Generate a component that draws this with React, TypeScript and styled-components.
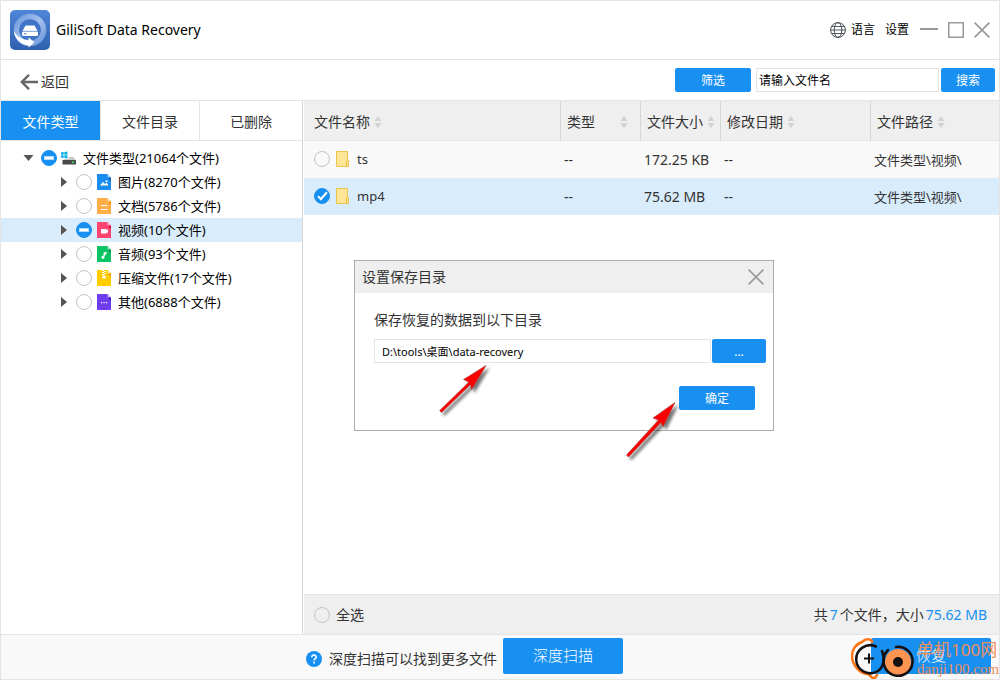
import React from 'react';
import styled, { createGlobalStyle, css } from 'styled-components';

const BLUE = '#1790f2';
const LINE = '#e4e4e4';
const SANS = '"Noto Sans", "Noto Sans CJK SC", sans-serif';

const GlobalStyle = createGlobalStyle`
  *, *::before, *::after { box-sizing: border-box; }
  body { margin: 0; background: #fff; color: #333; font: 14px/20px ${SANS}; }
  button, input { font: inherit; color: inherit; margin: 0; }
  svg { display: block; flex: none; }
`;

const Window = styled.div`
  position: relative;
  display: flex;
  flex-direction: column;
  min-height: 100vh;
  border: 1px solid ${LINE};
  overflow: hidden;
`;

const TitleBar = styled.header`
  display: flex;
  align-items: center;
  height: 59px;
  padding: 0 9px;
  border-bottom: 1px solid ${LINE};
  color: #000;
`;

const AppTitle = styled.h1`
  margin: 0 auto 0 6px;
  font-size: 14px;
  font-weight: 400;
`;

const MenuLinks = styled.nav`
  display: flex;
  align-items: center;
  gap: 10px;
  font-size: 12px;
`;

const WindowControls = styled.div`
  display: flex;
  align-items: center;
  gap: 10px;
  margin-left: 11px;
`;

const BareButton = styled.button`
  display: flex;
  align-items: center;
  gap: 5px;
  padding: 0;
  border: 0;
  background: none;
  cursor: pointer;
`;

const Toolbar = styled.div`
  display: flex;
  align-items: center;
  height: 41px;
  padding: 0 4px 0 19px;
  border-bottom: 1px solid ${LINE};
`;

const BackButton = styled(BareButton)`
  gap: 3px;
  margin-right: auto;
  padding-top: 4px;
`;

const FillButton = styled.button<{ $width: number; $large?: boolean }>`
  flex: none;
  width: ${(p) => p.$width}px;
  height: ${(p) => (p.$large ? 36 : 24)}px;
  padding: ${(p) => (p.$large ? '0 0 2px' : '2px 0 0')};
  border: 0;
  border-radius: 2px;
  background: ${BLUE};
  color: #fff;
  font-size: ${(p) => (p.$large ? 15 : 12)}px;
  font-weight: ${(p) => (p.$large ? 300 : 400)};
  cursor: pointer;
`;

const TextBox = styled.input`
  height: 24px;
  border: 1px solid ${LINE};
  background: #fff;
  color: #000;
  font-size: 11px;
  line-height: 20px;
  outline: none;
  &::placeholder { color: #000; opacity: 1; }
`;

const SearchBox = styled(TextBox)`
  width: 183px;
  margin: 0 2px 0 5px;
  padding: 1px 2px 0;
  font-size: 12px;
`;

const Main = styled.main`
  display: flex;
  flex: 1;
`;

const Sidebar = styled.aside`
  flex: none;
  width: 302px;
  border-right: 1px solid #d6d6d6;
`;

const Tabs = styled.div`
  display: grid;
  grid-template-columns: 100px 99px 1fr;
  height: 40px;
  border-bottom: 1px solid ${LINE};
`;

const Tab = styled.button<{ $active?: boolean }>`
  padding: 2px 0 0;
  border: 0;
  border-right: 1px solid ${LINE};
  background: ${(p) => (p.$active ? BLUE : '#fff')};
  color: ${(p) => (p.$active ? '#fff' : '#333')};
  cursor: pointer;
  &:last-child { border-right: 0; }
`;

const Tree = styled.ul`
  margin: 0;
  padding: 5px 0 0;
  list-style: none;
`;

const TreeRow = styled.li<{ $child?: boolean; $selected?: boolean }>`
  display: flex;
  align-items: center;
  height: 24px;
  padding-left: ${(p) => (p.$child ? 57 : 22)}px;
  background: ${(p) => (p.$selected ? '#d9ecfc' : 'transparent')};
`;

const TreeLabel = styled.label`
  display: flex;
  align-items: center;
  margin-left: 7px;
  color: #000;
  font-size: 13px;
  white-space: nowrap;
`;

const TreeIcon = styled.span`
  width: 16px;
  margin: 0 6px 0 4px;
`;

const RoundCheck = styled.input.attrs({ type: 'checkbox' })<{ $mixed?: boolean }>`
  position: relative;
  flex: none;
  width: 16px;
  height: 16px;
  appearance: none;
  border: 1px solid #c4c4c4;
  border-radius: 50%;
  background: transparent;
  &:checked { border-color: ${BLUE}; background: ${BLUE}; }
  &:checked::after {
    content: '';
    position: absolute;
    ${(p) =>
      p.$mixed
        ? css`left: 2px; top: 5px; width: 10px; height: 4px; background: #fff; border: 1px solid #b5dbfb;`
        : css`left: 5px; top: 1px; width: 5px; height: 10px; border: solid #fff; border-width: 0 2px 2px 0; transform: rotate(42deg);`}
  }
`;

const Content = styled.section`
  display: flex;
  flex: 1;
  flex-direction: column;
  padding-left: 1px;
`;

const FileTable = styled.table`
  width: 100%;
  table-layout: fixed;
  border-collapse: separate;
  border-spacing: 0;
`;

const HeadCell = styled.th<{ $width?: number }>`
  width: ${(p) => (p.$width ? p.$width + 'px' : 'auto')};
  height: 40px;
  padding: 2px 0 0 6px;
  border-bottom: 1px solid ${LINE};
  border-left: 1px solid #d6d6d6;
  background: #efefef;
  font-weight: 400;
  text-align: left;
  &:first-child { padding-left: 10px; border-left: 0; }
`;

const HeadLabel = styled.span<{ $spread?: boolean }>`
  display: flex;
  align-items: center;
  justify-content: ${(p) => (p.$spread ? 'space-between' : 'flex-start')};
  gap: 4px;
  padding-right: ${(p) => (p.$spread ? 12 : 0)}px;
`;

const FileRow = styled.tr<{ $selected?: boolean }>`
  background: ${(p) => (p.$selected ? '#d9ecfc' : '#f9f9f9')};
`;

const Cell = styled.td<{ $numeric?: boolean }>`
  height: 37px;
  padding: 0 0 0 4px;
  font-size: ${(p) => (p.$numeric ? 14 : 13)}px;
  white-space: nowrap;
  &:first-child { padding: 0 0 2px 10px; }
`;

const FileName = styled.label`
  display: flex;
  align-items: center;
`;

const FolderSlot = styled.span`
  margin: 0 8px 0 6px;
`;

const SummaryBar = styled.div`
  display: flex;
  align-items: center;
  justify-content: space-between;
  height: 40px;
  margin-top: auto;
  padding: 0 12px 0 10px;
  border-top: 1px solid ${LINE};
  background: #efefef;
`;

const SelectAll = styled.label`
  display: flex;
  align-items: center;
  gap: 6px;
`;

const Count = styled.span`
  margin: 0 2px;
  color: ${BLUE};
  &:last-child { margin-right: 0; }
`;

const Footer = styled.footer`
  display: flex;
  align-items: flex-start;
  height: 45px;
  padding: 3px 8px 0 305px;
  border-top: 1px solid ${LINE};
  background: #f9f9f9;
`;

const Hint = styled.div`
  display: flex;
  align-items: center;
  gap: 7px;
  height: 42px;
  margin-right: 6px;
`;

const RecoverSlot = styled.div`
  position: relative;
  margin-left: auto;
`;

const Watermark = styled.div`
  position: absolute;
  top: 0;
  right: -8px;
  display: flex;
  align-items: flex-start;
  gap: 3px;
  color: #ee8f5c;
  pointer-events: none;
`;

const WatermarkText = styled.div`
  width: 82px;
  padding-top: 2px;
  font-size: 17px;
  line-height: 20px;
  white-space: nowrap;
`;

const WatermarkSite = styled.div`
  font: 15px/18px "Liberation Serif", serif;
`;

const Dialog = styled.section`
  position: absolute;
  top: 259px;
  left: 353px;
  width: 420px;
  height: 171px;
  border: 1px solid #acacac;
  background: #fff;
`;

const DialogHeader = styled.div`
  display: flex;
  align-items: center;
  justify-content: space-between;
  height: 32px;
  padding: 0 9px 0 7px;
  background: #efefef;
`;

const DialogTitle = styled.h2`
  margin: 0;
  font-size: 14px;
  font-weight: 400;
`;

const DialogBody = styled.div`
  display: flex;
  flex-direction: column;
  gap: 9px;
  padding: 17px 7px 0 19px;
`;

const PathRow = styled.div`
  display: flex;
  gap: 1px;
`;

const PathBox = styled(TextBox)`
  flex: 1;
  min-width: 0;
  padding: 0 7px;
`;

const DialogActions = styled.div`
  display: flex;
  justify-content: flex-end;
  padding: 14px 11px 0 0;
`;

const Arrows = styled.svg`
  position: absolute;
  top: 99px;
  left: 80px;
  pointer-events: none;
`;

const AppLogo = () => (
  <svg width="40" height="40" viewBox="0 0 40 40" aria-hidden="true">
    <defs>
      <linearGradient id="tile" x1="0" y1="0" x2="0" y2="1">
        <stop offset="0" stopColor="#4f86d8" />
        <stop offset="1" stopColor="#2f60b0" />
      </linearGradient>
      <linearGradient id="ring" x1="0" y1="0" x2="1" y2="1">
        <stop offset="0" stopColor="#6f9ade" />
        <stop offset="0.5" stopColor="#a3c0ee" />
        <stop offset="1" stopColor="#6d97da" />
      </linearGradient>
    </defs>
    <rect width="40" height="40" rx="5" fill="url(#tile)" />
    <circle cx="20" cy="20" r="13.5" fill="none" stroke="url(#ring)" strokeWidth="5.500" />
    <circle cx="20" cy="20" r="10.6" fill="#3f74c6" />
    <path d="M3.800 21C5 29 10.500 34.500 18.500 35.500V37.500L24.500 32.300L18.500 27.500V30C12.500 30 7 27 3.800 21Z" fill="#fff" />
    <path d="M15.500 15.500H24.500L27.500 21H12.500Z" fill="#fff" />
    <rect x="12" y="21.300" width="16" height="4.700" rx="1.500" fill="#fff" />
    <path d="M13 21.300H27" stroke="#5a88d0" strokeWidth="0.700" />
    <path d="M14 23.800H16.500" stroke="#3c6fc0" strokeWidth="0.900" />
  </svg>
);

const Globe = () => (
  <svg width="16" height="16" viewBox="0 0 16 16" fill="none" stroke="#444c55" aria-hidden="true">
    <circle cx="8" cy="8" r="7.400" />
    <ellipse cx="8" cy="8" rx="3.800" ry="7.400" />
    <path d="M1.500 4.500H14.500M1.500 11.500H14.500M.6 8H15.400" strokeWidth="0.900" />
  </svg>
);

const Cross = () => (
  <svg width="16" height="16" viewBox="0 0 16 16" stroke="#999" strokeWidth="1.600" aria-hidden="true">
    <path d="M.6 .6L15.400 15.400M15.400 .6L.6 15.400" />
  </svg>
);

const SortMark = () => (
  <svg width="8" height="12" viewBox="0 0 8 12" fill="#d2d2d2" aria-hidden="true">
    <path d="M4 0L7.500 5H.5ZM4 12L.5 7H7.500Z" />
  </svg>
);

const Caret = ({ open }: { open?: boolean }) => (
  <svg width="11" height="10" viewBox="0 0 11 10" fill="#555" aria-hidden="true">
    <path d={open ? 'M.5 2H10.500L5.500 8Z' : 'M3 0V10L9 5Z'} />
  </svg>
);

const Folder = () => (
  <svg width="13" height="16" viewBox="0 0 13 16" aria-hidden="true">
    <path d="M.5 .5H11.500V9.500H12.500V15.500H.5Z" fill="#ffe596" stroke="#ecc54c" />
    <path d="M10.500 15V10.500L11.500 9.500" fill="none" stroke="#e5b934" />
  </svg>
);

const Drive = () => (
  <svg width="16" height="16" viewBox="0 0 16 16" aria-hidden="true">
    <path d="M0 2.300L2.700 2V4.700H0ZM3.300 1.900L6.500 1.500V4.700H3.300ZM0 5.300H2.700V8L0 7.700ZM3.300 5.300H6.500V8.500L3.300 8.100Z" fill="#12b4ea" />
    <path d="M7.500 7H12.500L15 10.500H1.500L3 9H7.500Z" fill="#c9c9c9" />
    <rect x="1.500" y="10" width="13.500" height="4.500" rx="0.500" fill="#484848" />
    <rect x="11" y="11.500" width="2" height="1.500" fill="#3ee85a" />
  </svg>
);

type Kind = 'image' | 'doc' | 'video' | 'audio' | 'zip' | 'other';

const PAGE: Record<Kind, [string, string]> = {
  image: ['#1a8cf0', '#0c62b8'],
  doc: ['#ffae48', '#ff8c00'],
  video: ['#ff4470', '#d8003c'],
  audio: ['#0dc464', '#088c46'],
  zip: ['#ffcc00', '#e89c00'],
  other: ['#6f3df0', '#4310c0'],
};

const GLYPH: Record<Kind, React.ReactNode> = {
  image: <path d="M3 11.500L6 8L8 10L9.500 8.500L11.500 11.500ZM8.500 6.500H10.500V8H8.500Z" fill="#fff" />,
  doc: <path d="M4 7.500H10.500M4 11.500H10.500" stroke="#fff" />,
  video: <path d="M4 7H9.500V8.300L11 7.500V11L9.500 10.200V11.500H4Z" fill="#fff" />,
  audio: <path d="M7 10.500V6.500L10 7M6.900 10.500A1.200 1.200 0 1 1 5 10.500A1.200 1.200 0 0 1 6.900 10.500" stroke="#fff" fill="#fff" strokeWidth="0.900" />,
  zip: <path d="M5 0H7V1H5ZM7 1H9V2H7ZM5 2H7V3H5ZM7 3H9V4H7ZM5 4H7V5H5ZM5.500 5.500H8.500V8.500H5.500Z" fill="#fff" />,
  other: <path d="M4 8H5.200V9.200H4ZM6.500 8H7.700V9.200H6.500ZM9 8H10.200V9.200H9Z" fill="#fff" />,
};

const PageIcon = ({ kind }: { kind: Kind }) => (
  <svg width="16" height="16" viewBox="-1 0 16 16" aria-hidden="true">
    <path d="M0 0H10.500L14 3.500V16H0Z" fill={PAGE[kind][0]} />
    <path d="M10.500 3.500H14V7Z" fill={PAGE[kind][1]} />
    <path d="M10.500 0L14 3.500H10.500Z" fill="#fff" opacity="0.550" />
    {GLYPH[kind]}
  </svg>
);

const WatermarkLogo = () => (
  <svg width="63" height="42" viewBox="0 0 63 42" fill="none" aria-hidden="true">
    <path d="M21 4C21 1 15 0 11 4C3 7 0 14 1.500 22C4 31 11 36 17 36C20 37 19 40 23 40C25 40 25 38 26 37" stroke="#ff7410" strokeWidth="2.500" strokeLinecap="round" />
    <path d="M25 8.500A14 14 0 1 0 26 33.500C33 30 34 20 31 13" stroke="#151010" strokeWidth="2.500" strokeLinecap="round" />
    <path d="M13 20.500H23M18 15.500V25.500" stroke="#151010" strokeWidth="2" />
    <circle cx="47" cy="24" r="13" fill="#ff9350" />
    <path d="M45 9A14.500 14.500 0 1 1 33 20C33 17 35 14 37 12" stroke="#151010" strokeWidth="2.500" strokeLinecap="round" />
    <circle cx="47" cy="24" r="5" fill="#151010" />
  </svg>
);

const TREE: { kind: Kind; label: string; mixed?: boolean }[] = [
  { kind: 'image', label: '图片(8270个文件)' },
  { kind: 'doc', label: '文档(5786个文件)' },
  { kind: 'video', label: '视频(10个文件)', mixed: true },
  { kind: 'audio', label: '音频(93个文件)' },
  { kind: 'zip', label: '压缩文件(17个文件)' },
  { kind: 'other', label: '其他(6888个文件)' },
];

const COLUMNS: { label: string; width?: number; spread?: boolean }[] = [
  { label: '文件名称' },
  { label: '类型', width: 80, spread: true },
  { label: '文件大小', width: 80 },
  { label: '修改日期', width: 150 },
  { label: '文件路径', width: 129 },
];

const FILES = [
  { name: 'ts', size: '172.25 KB', selected: false },
  { name: 'mp4', size: '75.62 MB', selected: true },
];

export default function App() {
  return (
    <Window>
      <GlobalStyle />
      <TitleBar>
        <AppLogo />
        <AppTitle>GiliSoft Data Recovery</AppTitle>
        <MenuLinks>
          <BareButton><Globe />语言</BareButton>
          <BareButton>设置</BareButton>
        </MenuLinks>
        <WindowControls>
          <BareButton aria-label="最小化">
            <svg width="18" height="16" viewBox="0 0 18 16"><path d="M0 7H18" stroke="#999" strokeWidth="2" /></svg>
          </BareButton>
          <BareButton aria-label="最大化">
            <svg width="16" height="16" viewBox="0 0 16 16"><rect x="0.750" y="0.750" width="14.500" height="14.500" fill="none" stroke="#999" strokeWidth="1.500" /></svg>
          </BareButton>
          <BareButton aria-label="关闭"><Cross /></BareButton>
        </WindowControls>
      </TitleBar>

      <Toolbar>
        <BackButton>
          <svg width="18" height="16" viewBox="0 0 18 16" fill="none" stroke="#666" strokeWidth="2.400" aria-hidden="true">
            <path d="M9 .8L1.800 8L9 15.200M1.800 8H18" />
          </svg>
          返回
        </BackButton>
        <FillButton $width={76}>筛选</FillButton>
        <SearchBox type="text" placeholder="请输入文件名" aria-label="文件名" />
        <FillButton $width={54}>搜索</FillButton>
      </Toolbar>

      <Main>
        <Sidebar>
          <Tabs>
            <Tab $active>文件类型</Tab>
            <Tab>文件目录</Tab>
            <Tab>已删除</Tab>
          </Tabs>
          <Tree>
            <TreeRow>
              <Caret open />
              <TreeLabel>
                <RoundCheck $mixed defaultChecked />
                <TreeIcon><Drive /></TreeIcon>
                文件类型(21064个文件)
              </TreeLabel>
            </TreeRow>
            {TREE.map((item) => (
              <TreeRow key={item.kind} $child $selected={item.mixed}>
                <Caret />
                <TreeLabel>
                  <RoundCheck $mixed={item.mixed} defaultChecked={item.mixed} />
                  <TreeIcon><PageIcon kind={item.kind} /></TreeIcon>
                  {item.label}
                </TreeLabel>
              </TreeRow>
            ))}
          </Tree>
        </Sidebar>

        <Content>
          <FileTable>
            <thead>
              <tr>
                {COLUMNS.map((c) => (
                  <HeadCell key={c.label} $width={c.width}>
                    <HeadLabel $spread={c.spread}>{c.label}<SortMark /></HeadLabel>
                  </HeadCell>
                ))}
              </tr>
            </thead>
            <tbody>
              {FILES.map((f) => (
                <FileRow key={f.name} $selected={f.selected}>
                  <Cell>
                    <FileName>
                      <RoundCheck defaultChecked={f.selected} />
                      <FolderSlot><Folder /></FolderSlot>
                      {f.name}
                    </FileName>
                  </Cell>
                  <Cell $numeric>--</Cell>
                  <Cell $numeric>{f.size}</Cell>
                  <Cell $numeric>--</Cell>
                  <Cell>文件类型\视频\</Cell>
                </FileRow>
              ))}
            </tbody>
          </FileTable>
          <SummaryBar>
            <SelectAll><RoundCheck />全选</SelectAll>
            <span>共<Count>7</Count>个文件，大小<Count>75.62 MB</Count></span>
          </SummaryBar>
        </Content>
      </Main>

      <Footer>
        <Hint>
          <svg width="16" height="16" viewBox="0 0 16 16" fill="none" aria-hidden="true">
            <circle cx="8" cy="8" r="8" fill={BLUE} />
            <path d="M5.800 6.200C5.800 3.300 10.300 3.400 10.200 6C10.200 7.700 8 7.600 8 9.500" stroke="#fff" strokeWidth="1.600" />
            <rect x="7.200" y="10.700" width="1.700" height="1.700" fill="#fff" />
          </svg>
          深度扫描可以找到更多文件
        </Hint>
        <FillButton $width={120} $large>深度扫描</FillButton>
        <RecoverSlot>
          <FillButton $width={120} $large>恢复</FillButton>
          <Watermark>
            <WatermarkLogo />
            <WatermarkText>
              单机100网
              <WatermarkSite>danji100.com</WatermarkSite>
            </WatermarkText>
          </Watermark>
        </RecoverSlot>
      </Footer>

      <Dialog role="dialog" aria-labelledby="dialog-title">
        <DialogHeader>
          <DialogTitle id="dialog-title">设置保存目录</DialogTitle>
          <BareButton aria-label="关闭"><Cross /></BareButton>
        </DialogHeader>
        <DialogBody>
          <label htmlFor="save-path">保存恢复的数据到以下目录</label>
          <PathRow>
            <PathBox id="save-path" type="text" defaultValue={'D:\\tools\\桌面\\data-recovery'} />
            <FillButton $width={54}>...</FillButton>
          </PathRow>
          <DialogActions>
            <FillButton $width={76}>确定</FillButton>
          </DialogActions>
        </DialogBody>
        <Arrows width="250" height="110" viewBox="435 360 250 110" aria-hidden="true">
          <defs>
            <filter id="shade" x="-20%" y="-20%" width="150%" height="150%">
              <feDropShadow dx="3" dy="3" stdDeviation="1.800" floodColor="#000" floodOpacity="0.550" />
            </filter>
          </defs>
          <g fill="#fb0303" stroke="#a33" strokeWidth="0.600" filter="url(#shade)">
            <path d="M486 365.500L463.500 379.500L469 382L439.700 410.500L441.500 412.500L470.500 384.500L471.500 389.500Z" />
            <path d="M675 402.500L653 418L658.500 420L626.500 455L628.500 457L661 422.500L663 426.500Z" />
          </g>
        </Arrows>
      </Dialog>
    </Window>
  );
}
